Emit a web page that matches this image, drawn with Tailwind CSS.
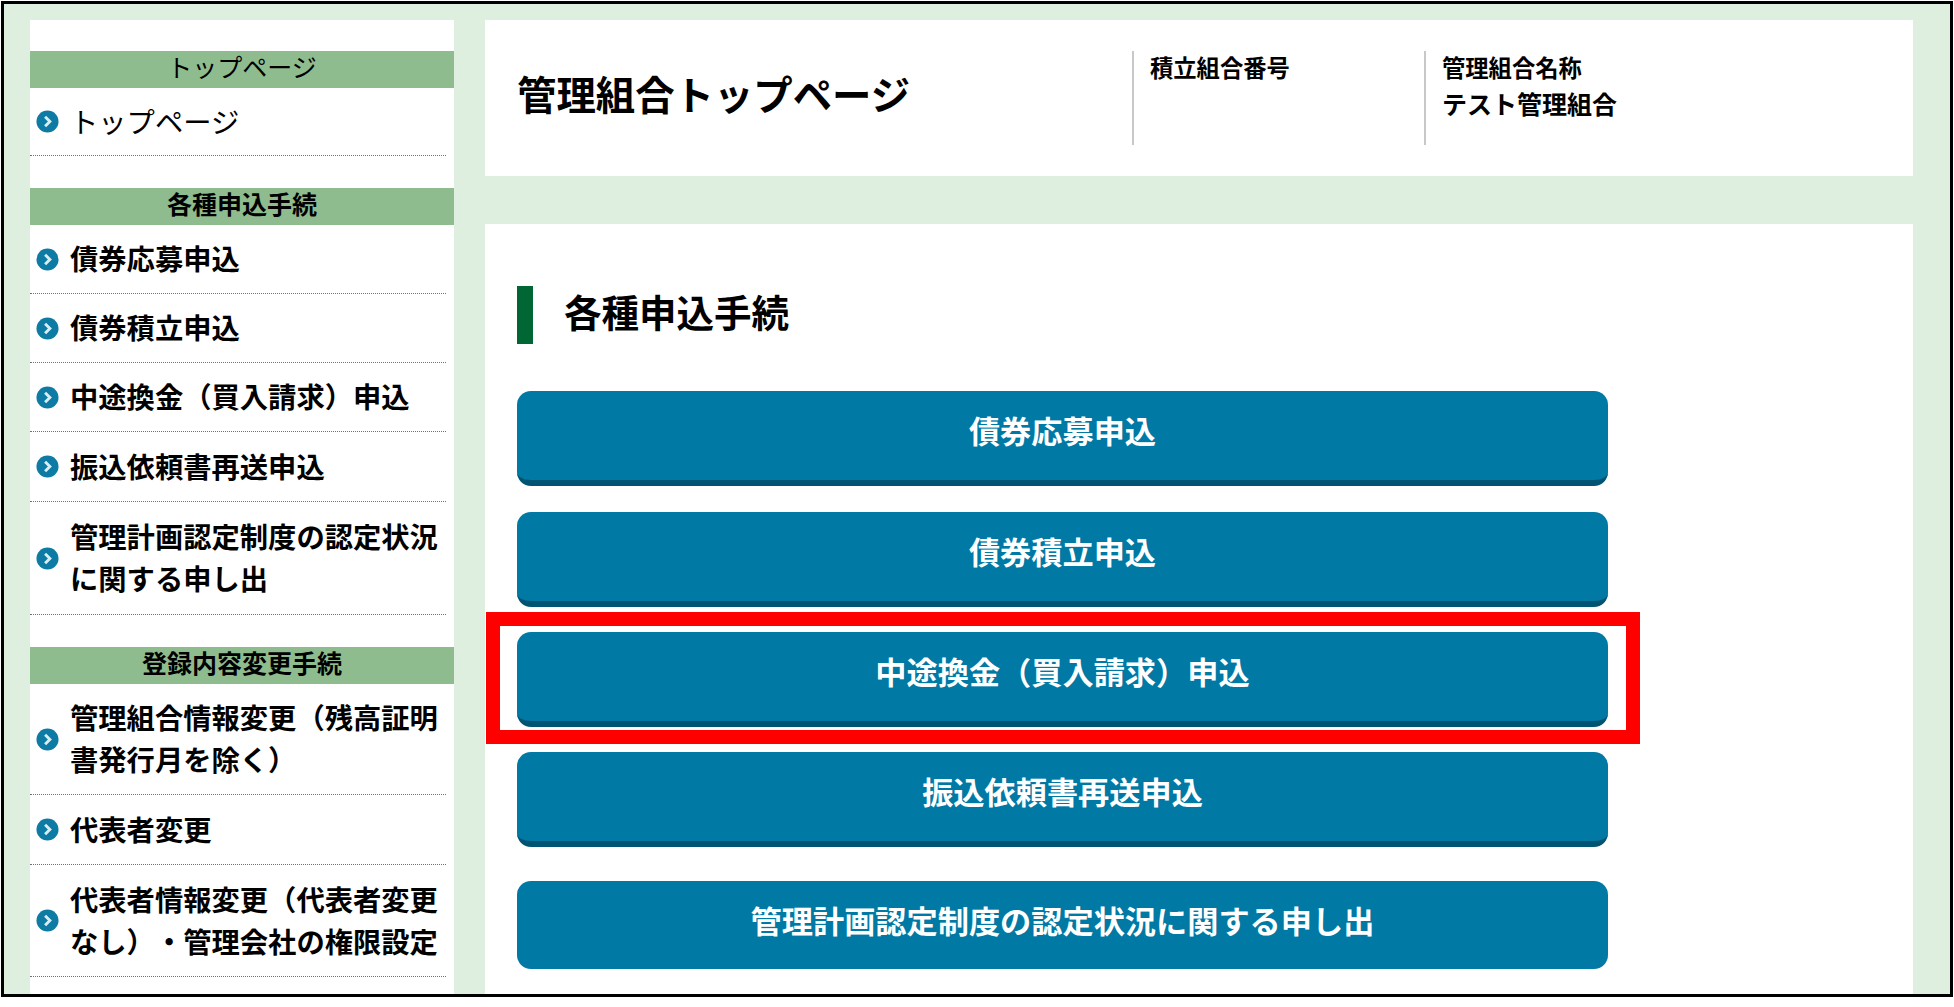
<!DOCTYPE html>
<html lang="ja">
<head>
<meta charset="UTF-8" />
<title>管理組合トップページ</title>
<script src="https://cdn.jsdelivr.net/npm/@tailwindcss/browser@4"></script>
</head>
<body class="bg-white overflow-hidden font-['Noto_Sans_CJK_JP','Noto_Sans',sans-serif] text-black [text-spacing-trim:space-all]">
<div class="relative m-[1px] w-[1952px] h-[996px] border-[3px] border-black bg-[#dfefdf] flex overflow-hidden">

  <!-- sidebar -->
  <aside class="ml-[26px] mt-[16px] w-[424px] h-[980px] bg-white pt-[31px] shrink-0">
    <h2 class="h-[37px] bg-[#8fbc8f] text-center text-[25px] leading-[31px]">トップページ</h2>
    <a class="flex items-center w-[416px] h-[68px] pl-[6px] gap-[11px] border-b border-dotted border-gray-500 text-[28.3px] leading-[42px]">
      <svg class="w-[23px] h-[23px] shrink-0 blur-[0.6px]" viewBox="0 0 24 24"><circle cx="12" cy="12" r="11.5" fill="#0d7ba3"/><path d="M9.5 7l5 5-5 5" fill="none" stroke="#d8eef5" stroke-width="3"/></svg>
      <span class="pb-[2px]">トップページ</span>
    </a>

    <h2 class="mt-[32px] h-[37px] bg-[#8fbc8f] text-center text-[25px] leading-[31px] font-bold">各種申込手続</h2>
    <a class="flex items-center w-[416px] h-[69px] pl-[6px] gap-[11px] border-b border-dotted border-gray-500 text-[28.3px] leading-[42px] font-bold">
      <svg class="w-[23px] h-[23px] shrink-0 blur-[0.6px]" viewBox="0 0 24 24"><circle cx="12" cy="12" r="11.5" fill="#0d7ba3"/><path d="M9.5 7l5 5-5 5" fill="none" stroke="#d8eef5" stroke-width="3"/></svg>
      <span class="pb-[2px]">債券応募申込</span>
    </a>
    <a class="flex items-center w-[416px] h-[69px] pl-[6px] gap-[11px] border-b border-dotted border-gray-500 text-[28.3px] leading-[42px] font-bold">
      <svg class="w-[23px] h-[23px] shrink-0 blur-[0.6px]" viewBox="0 0 24 24"><circle cx="12" cy="12" r="11.5" fill="#0d7ba3"/><path d="M9.5 7l5 5-5 5" fill="none" stroke="#d8eef5" stroke-width="3"/></svg>
      <span class="pb-[2px]">債券積立申込</span>
    </a>
    <a class="flex items-center w-[416px] h-[69px] pl-[6px] gap-[11px] border-b border-dotted border-gray-500 text-[28.3px] leading-[42px] font-bold">
      <svg class="w-[23px] h-[23px] shrink-0 blur-[0.6px]" viewBox="0 0 24 24"><circle cx="12" cy="12" r="11.5" fill="#0d7ba3"/><path d="M9.5 7l5 5-5 5" fill="none" stroke="#d8eef5" stroke-width="3"/></svg>
      <span class="pb-[2px]">中途換金（買入請求）申込</span>
    </a>
    <a class="flex items-center w-[416px] h-[70px] pl-[6px] gap-[11px] border-b border-dotted border-gray-500 text-[28.3px] leading-[42px] font-bold">
      <svg class="w-[23px] h-[23px] shrink-0 blur-[0.6px]" viewBox="0 0 24 24"><circle cx="12" cy="12" r="11.5" fill="#0d7ba3"/><path d="M9.5 7l5 5-5 5" fill="none" stroke="#d8eef5" stroke-width="3"/></svg>
      <span class="pb-[2px]">振込依頼書再送申込</span>
    </a>
    <a class="flex items-center w-[416px] h-[113px] pl-[6px] gap-[11px] border-b border-dotted border-gray-500 text-[28.3px] leading-[42px] font-bold">
      <svg class="w-[23px] h-[23px] shrink-0 blur-[0.6px]" viewBox="0 0 24 24"><circle cx="12" cy="12" r="11.5" fill="#0d7ba3"/><path d="M9.5 7l5 5-5 5" fill="none" stroke="#d8eef5" stroke-width="3"/></svg>
      <span class="pb-[2px]">管理計画認定制度の認定状況に関する申し出</span>
    </a>

    <h2 class="mt-[32px] h-[37px] bg-[#8fbc8f] text-center text-[25px] leading-[31px] font-bold">登録内容変更手続</h2>
    <a class="flex items-center w-[416px] h-[111px] pl-[6px] gap-[11px] border-b border-dotted border-gray-500 text-[28.3px] leading-[42px] font-bold">
      <svg class="w-[23px] h-[23px] shrink-0 blur-[0.6px]" viewBox="0 0 24 24"><circle cx="12" cy="12" r="11.5" fill="#0d7ba3"/><path d="M9.5 7l5 5-5 5" fill="none" stroke="#d8eef5" stroke-width="3"/></svg>
      <span class="pb-[2px]">管理組合情報変更（残高証明書発行月を除く）</span>
    </a>
    <a class="flex items-center w-[416px] h-[70px] pl-[6px] gap-[11px] border-b border-dotted border-gray-500 text-[28.3px] leading-[42px] font-bold">
      <svg class="w-[23px] h-[23px] shrink-0 blur-[0.6px]" viewBox="0 0 24 24"><circle cx="12" cy="12" r="11.5" fill="#0d7ba3"/><path d="M9.5 7l5 5-5 5" fill="none" stroke="#d8eef5" stroke-width="3"/></svg>
      <span class="pb-[2px]">代表者変更</span>
    </a>
    <a class="flex items-center w-[416px] h-[112px] pl-[6px] gap-[11px] border-b border-dotted border-gray-500 text-[28.3px] leading-[42px] font-bold">
      <svg class="w-[23px] h-[23px] shrink-0 blur-[0.6px]" viewBox="0 0 24 24"><circle cx="12" cy="12" r="11.5" fill="#0d7ba3"/><path d="M9.5 7l5 5-5 5" fill="none" stroke="#d8eef5" stroke-width="3"/></svg>
      <span class="pb-[2px]">代表者情報変更（代表者変更なし）・管理会社の権限設定</span>
    </a>
  </aside>

  <!-- main -->
  <main class="ml-[31px] mt-[16px] w-[1428px] shrink-0">
    <header class="h-[156px] bg-white flex items-center pl-[32px]">
      <h1 class="w-[615px] pb-[10px] text-[39.4px] leading-none font-bold">管理組合トップページ</h1>
      <div class="w-[292px] h-[94px] border-l-2 border-[#c8c8c8] pl-[16px] text-[23.3px] leading-[32px] font-bold">積立組合番号</div>
      <div class="h-[94px] border-l-2 border-[#c8c8c8] pl-[16px] font-bold">
        <p class="text-[23.3px] leading-[32px]">管理組合名称</p>
        <p class="text-[25px] leading-[41px]">テスト管理組合</p>
      </div>
    </header>

    <section class="mt-[48px] h-[800px] bg-white px-[32px] pt-[62px]">
      <h2 class="flex items-center h-[58px] pb-[9px] border-l-16 border-[#006633] pl-[31px] text-[37.5px] leading-none font-bold">各種申込手続</h2>
      <a class="mt-[47px] flex items-center justify-center w-[1091px] h-[95px] pb-[10px] rounded-[14px] bg-[#0079a5] border-b-[6px] border-[#005473] text-white text-[31.2px] font-bold">債券応募申込</a>
      <a class="mt-[26px] flex items-center justify-center w-[1091px] h-[95px] pb-[10px] rounded-[14px] bg-[#0079a5] border-b-[6px] border-[#005473] text-white text-[31.2px] font-bold">債券積立申込</a>
      <a class="mt-[25px] flex items-center justify-center w-[1091px] h-[95px] pb-[10px] rounded-[14px] bg-[#0079a5] border-b-[6px] border-[#005473] text-white text-[31.2px] font-bold">中途換金（買入請求）申込</a>
      <a class="mt-[25px] flex items-center justify-center w-[1091px] h-[95px] pb-[10px] rounded-[14px] bg-[#0079a5] border-b-[6px] border-[#005473] text-white text-[31.2px] font-bold">振込依頼書再送申込</a>
      <a class="mt-[34px] flex items-center justify-center w-[1091px] h-[88px] pb-[10px] rounded-[14px] bg-[#0079a5] text-white text-[31.2px] font-bold">管理計画認定制度の認定状況に関する申し出</a>
    </section>
  </main>

  <!-- annotation box laid over the screenshot -->
  <div class="absolute left-[482px] top-[608px] w-[1154px] h-[132px] border-[14px] border-[#ff0000]"></div>
</div>
</body>
</html>
